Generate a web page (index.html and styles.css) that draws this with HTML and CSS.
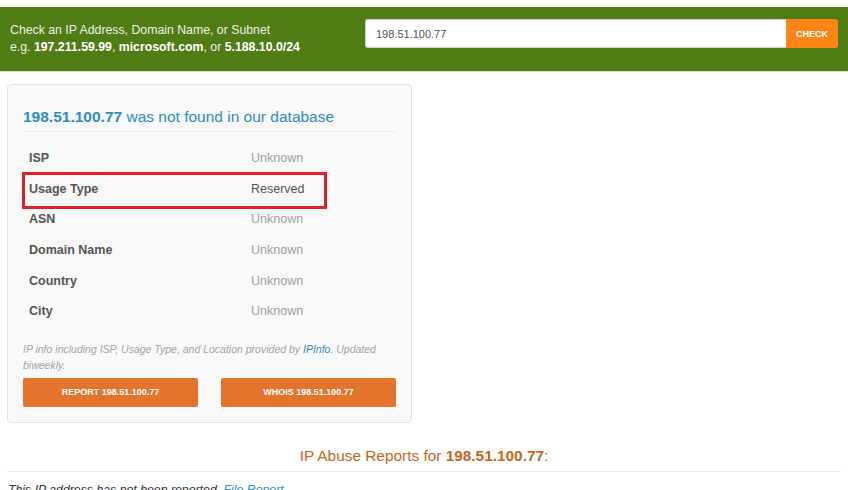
FILE: index.html
```html
<!DOCTYPE html>
<html>
<head>
<meta charset="utf-8">
<link rel="stylesheet" href="styles.css">
</head>
<body>
<header class="search-bar">
  <div class="search-hint">
    <div>Check an IP Address, Domain Name, or Subnet</div>
    <div>e.g. <b>197.211.59.99</b>, <b>microsoft.com</b>, or <b>5.188.10.0/24</b></div>
  </div>
  <form class="search-form">
    <input class="search-input" type="text" value="198.51.100.77">
    <button class="search-btn" type="button">CHECK</button>
  </form>
</header>

<main class="content">
  <section class="card">
    <h2 class="card-title"><b>198.51.100.77</b> was not found in our database</h2>
    <table class="info-table">
      <tr><th>ISP</th><td>Unknown</td></tr>
      <tr class="highlight"><th>Usage Type</th><td class="known">Reserved</td></tr>
      <tr><th>ASN</th><td>Unknown</td></tr>
      <tr><th>Domain Name</th><td>Unknown</td></tr>
      <tr><th>Country</th><td>Unknown</td></tr>
      <tr><th>City</th><td>Unknown</td></tr>
    </table>
    <p class="card-note">IP info including ISP, Usage Type, and Location provided by <a href="#">IPInfo</a>. Updated biweekly.</p>
    <div class="card-actions">
      <a class="action-btn" href="#">REPORT 198.51.100.77</a>
      <a class="action-btn" href="#">WHOIS 198.51.100.77</a>
    </div>
  </section>

  <h3 class="reports-title">IP Abuse Reports for <b>198.51.100.77</b>:</h3>
  <p class="reports-empty">This IP address has not been reported. <a href="#">File Report</a></p>
</main>
</body>
</html>
```

FILE: styles.css
```css
html, body {
  margin: 0;
  padding: 0;
  background: #fff;
}
body {
  padding-top: 7px;
  font-family: "Liberation Sans", Arial, sans-serif;
  color: #333;
}
.search-bar {
  display: flex;
  justify-content: space-between;
  align-items: flex-start;
  height: 65px;
  box-sizing: border-box;
  background: #4f7c14;
  border-bottom: 1px solid #d9dcd4;
  padding: 15px 10px 0 10px;
}
.search-hint {
  color: #eef2e8;
  font-size: 12.3px;
  line-height: 17px;
}
.search-hint b {
  color: #fff;
}
.search-form {
  display: flex;
  width: 473px;
  margin-top: -3px;
}
.search-input {
  flex: 1;
  height: 29px;
  box-sizing: border-box;
  border: 1px solid #cfcfcf;
  border-right: none;
  border-radius: 3px 0 0 3px;
  padding: 0 10px;
  font-family: "Liberation Sans", Arial, sans-serif;
  font-size: 11px;
  color: #555;
  background: #fff;
}
.search-btn {
  width: 52px;
  height: 29px;
  border: none;
  border-radius: 0 3px 3px 0;
  background: #ff8517;
  color: #fff;
  font-family: "Liberation Sans", Arial, sans-serif;
  font-weight: bold;
  font-size: 9px;
  padding: 0;
}
.content {
  padding: 12px 7px 0 7px;
}
.card {
  width: 405px;
  box-sizing: border-box;
  background: #f9f9f9;
  border: 1px solid #e3e3e3;
  border-radius: 4px;
  padding: 20px 15px 15px 15px;
}
.card-title {
  margin: 0;
  font-size: 15.5px;
  font-weight: normal;
  color: #2f8dc0;
  line-height: 24px;
  padding-bottom: 2px;
  border-bottom: 1px solid #ececec;
}
.card-title b {
  font-weight: bold;
}
.info-table {
  width: 100%;
  border-collapse: collapse;
  margin-top: 11px;
  font-size: 12.5px;
}
.info-table th, .info-table td {
  height: 30.6px;
  padding: 0 6px;
  text-align: left;
  vertical-align: middle;
}
.info-table th {
  width: 210px;
  color: #555;
  font-weight: bold;
}
.info-table td {
  color: #a0a0a0;
}
.info-table td.known {
  color: #555;
}
.highlight th {
  position: relative;
}
.highlight th::after {
  content: "";
  position: absolute;
  left: -1px;
  top: -2px;
  width: 299px;
  height: 31px;
  border: 3px solid #e12026;
  pointer-events: none;
}
.card-note {
  margin: 14px 0 5px 0;
  font-size: 10.5px;
  font-style: italic;
  line-height: 16px;
  color: #a3a3a3;
}
.card-note a {
  color: #2f8dc0;
  text-decoration: none;
}
.card-actions {
  display: flex;
  justify-content: space-between;
}
.action-btn {
  width: 175px;
  height: 29px;
  line-height: 29px;
  text-align: center;
  background: #e2742b;
  border-radius: 2px;
  color: #fff;
  font-weight: bold;
  font-size: 9px;
  text-decoration: none;
}
.reports-title {
  margin: 21px 0 0 0;
  text-align: center;
  font-size: 15.4px;
  font-weight: normal;
  line-height: 24px;
  color: #c3671a;
  padding-bottom: 3px;
  border-bottom: 1px solid #e8e8e8;
}
.reports-title b {
  font-weight: bold;
}
.reports-empty {
  margin: 11px 0 0 1px;
  font-size: 12.3px;
  font-style: italic;
  color: #333;
}
.reports-empty a {
  color: #2f8dc0;
  text-decoration: none;
}
```
